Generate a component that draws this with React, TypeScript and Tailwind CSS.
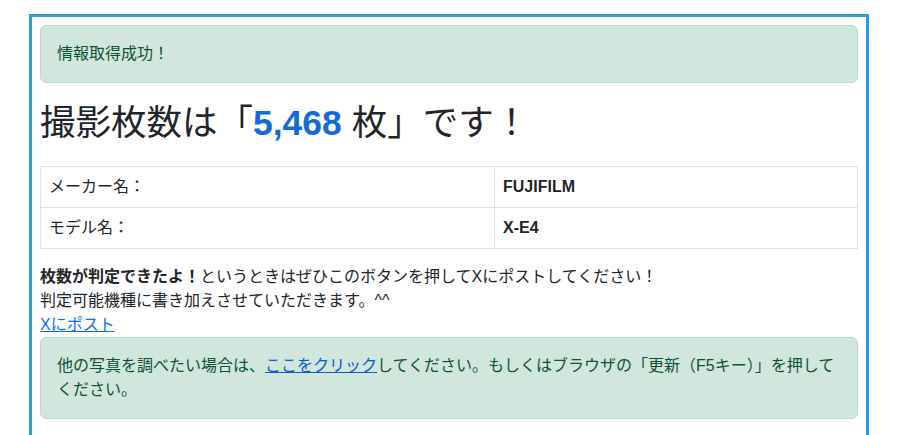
const font = "font-['Liberation_Sans','Noto_Sans_CJK_JP',sans-serif]";

const specs = [
	{ label: "メーカー名：", value: "FUJIFILM" },
	{ label: "モデル名：", value: "X-E4" },
];

export default function App() {
	return (
		<div className={`${font} min-h-screen bg-white text-[16px] leading-[1.5] text-[#212529]`}>
			<div className="ml-[29px] mt-[14px] w-[840px] border-[3px] border-[#2d9fd8] p-2 pb-6">
				{/* Success alert */}
				<div className="mb-4 rounded-[6px] border border-[#badbcc] bg-[#d1e7dd] px-4 py-4 text-[#0f5132]">
					情報取得成功！
				</div>

				{/* Heading */}
				<h1 className="mb-[21px] pt-[3px] text-[35.5px] font-normal leading-[1.2] text-[#212529]">
					撮影枚数は「
					<span className="font-bold text-[#1469d8]">5,468</span> 枚」です！
				</h1>

				{/* Camera info */}
				<table className="mb-4 w-full border-collapse border border-[#dee2e6]">
					<tbody>
						{specs.map((row) => (
							<tr key={row.label}>
								<td className="w-[454px] border border-[#dee2e6] px-2 py-2">
									{row.label}
								</td>
								<td className="border border-[#dee2e6] px-2 py-2 font-bold">
									{row.value}
								</td>
							</tr>
						))}
					</tbody>
				</table>

				<p>
					<strong>枚数が判定できたよ！</strong>
					というときはぜひこのボタンを押してXにポストしてください！
					<br />
					判定可能機種に書き加えさせていただきます。^^
					<br />
					<a href="#" className="text-[#0d6efd] underline">
						Xにポスト
					</a>
				</p>

				{/* Reload alert */}
				<div className="rounded-[6px] border border-[#badbcc] bg-[#d1e7dd] p-4 text-[#0f5132]">
					他の写真を調べたい場合は、
					<a href="#" className="text-[#0a58ca] underline">
						ここをクリック
					</a>
					してください。もしくはブラウザの「更新（F5キー）」を押してください。
				</div>
			</div>
		</div>
	);
}
